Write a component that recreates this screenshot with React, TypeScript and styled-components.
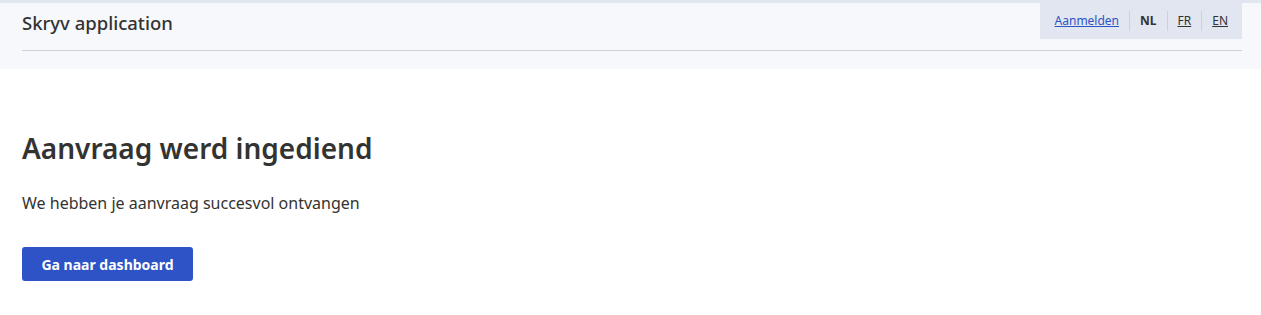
import React from "react";
import styled, { createGlobalStyle } from "styled-components";

const Global = createGlobalStyle`
  html, body { margin: 0; padding: 0; background: #fff; }
  body { font-family: "Noto Sans", "Open Sans", sans-serif; color: #333332; }
`;

const Header = styled.header`
  border-top: 3px solid #e1e6f0;
  background: #f7f8fc;
  padding: 0 19px 0 22px;
  height: 66px;
`;

const HeaderInner = styled.div`
  display: flex;
  justify-content: space-between;
  align-items: flex-start;
  border-bottom: 1px solid #cbd2da;
  height: 47px;
`;

const Brand = styled.div`
  font-size: 18.5px;
  font-weight: 500;
  color: #333332;
  padding-top: 8px;
  line-height: 24px;
`;

const Nav = styled.nav`
  display: flex;
  align-items: center;
  background: #e1e6f0;
  height: 36px;
  padding: 0 14px 0 15px;
`;

const NavItem = styled.a<{ $active?: boolean; $primary?: boolean }>`
  font-size: 12px;
  line-height: 20px;
  padding: 0 10px;
  border-left: 1px solid #cbd2da;
  color: ${(p) => (p.$primary ? "#2d53c6" : "#333332")};
  font-weight: ${(p) => (p.$active ? 700 : 400)};
  text-decoration: ${(p) => (p.$active ? "none" : "underline")};
  cursor: pointer;
  &:first-child { border-left: none; padding-left: 0; }
  &:last-child { padding-right: 0; }
`;

const Main = styled.main`
  padding: 61px 22px 0;
`;

const Title = styled.h1`
  margin: 0;
  font-size: 28px;
  font-weight: 600;
  line-height: 36px;
  color: #333332;
`;

const Text = styled.p`
  margin: 25px 0 0;
  font-size: 16px;
  line-height: 24px;
`;

const Button = styled.button`
  margin-top: 32px;
  height: 34px;
  width: 171px;
  border: none;
  border-radius: 3px;
  background: #2d53c6;
  color: #fff;
  font-family: inherit;
  font-size: 14px;
  font-weight: 700;
  cursor: pointer;
`;

export default function App() {
  return (
    <>
      <Global />
      <Header>
        <HeaderInner>
          <Brand>Skryv application</Brand>
          <Nav>
            <NavItem $primary>Aanmelden</NavItem>
            <NavItem $active>NL</NavItem>
            <NavItem>FR</NavItem>
            <NavItem>EN</NavItem>
          </Nav>
        </HeaderInner>
      </Header>
      <Main>
        <Title>Aanvraag werd ingediend</Title>
        <Text>We hebben je aanvraag succesvol ontvangen</Text>
        <Button>Ga naar dashboard</Button>
      </Main>
    </>
  );
}
